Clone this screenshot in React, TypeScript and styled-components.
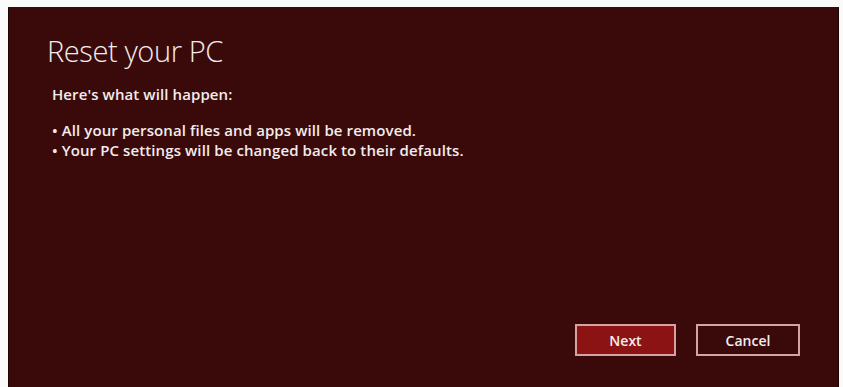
import styled, { createGlobalStyle } from 'styled-components';

const GlobalStyle = createGlobalStyle`
  html, body {
    margin: 0;
    padding: 0;
    background: #fbfafa;
    font-family: "Open Sans", "Noto Sans", sans-serif;
  }
`;

const Page = styled.div`
  width: 843px;
  height: 387px;
  padding: 7px 4px 0 8px;
  box-sizing: border-box;
  overflow: hidden;
`;

const Panel = styled.div`
  height: 380px;
  background: #3a0a0a;
  border-left: 1px solid #1e0404;
  border-right: 1px solid #1e0404;
  display: flex;
  flex-direction: column;
  padding: 25px 38px 31px 38px;
  box-sizing: border-box;
  color: #f3ecec;
`;

const Title = styled.h1`
  margin: 0;
  font-size: 29px;
  font-weight: 300;
  line-height: 38px;
  letter-spacing: -0.4px;
`;

const Intro = styled.p`
  margin: 15px 0 0 5px;
  font-size: 15px;
  font-weight: 600;
  line-height: 18px;
  letter-spacing: 0.1px;
`;

const List = styled.ul`
  list-style: none;
  margin: 17px 0 0 5px;
  padding: 0;
  font-size: 15px;
  font-weight: 600;
  line-height: 20px;
  letter-spacing: 0.1px;
`;

const Item = styled.li`
  &::before {
    content: '• ';
  }
`;

const Actions = styled.div`
  margin-top: auto;
  display: flex;
  justify-content: flex-end;
  gap: 20px;
`;

const ActionButton = styled.button<{ $primary?: boolean }>`
  width: ${(p) => (p.$primary ? '101px' : '104px')};
  height: 32px;
  box-sizing: border-box;
  border: 2px solid #d6a3a3;
  background: ${(p) => (p.$primary ? '#8c1313' : '#3a0a0a')};
  color: #f5eded;
  font-family: inherit;
  font-size: 14px;
  font-weight: 600;
  cursor: pointer;
`;

export default function App() {
  return (
    <>
      <GlobalStyle />
      <Page>
        <Panel>
          <Title>Reset your PC</Title>
          <Intro>Here's what will happen:</Intro>
          <List>
            <Item>All your personal files and apps will be removed.</Item>
            <Item>Your PC settings will be changed back to their defaults.</Item>
          </List>
          <Actions>
            <ActionButton $primary>Next</ActionButton>
            <ActionButton>Cancel</ActionButton>
          </Actions>
        </Panel>
      </Page>
    </>
  );
}
